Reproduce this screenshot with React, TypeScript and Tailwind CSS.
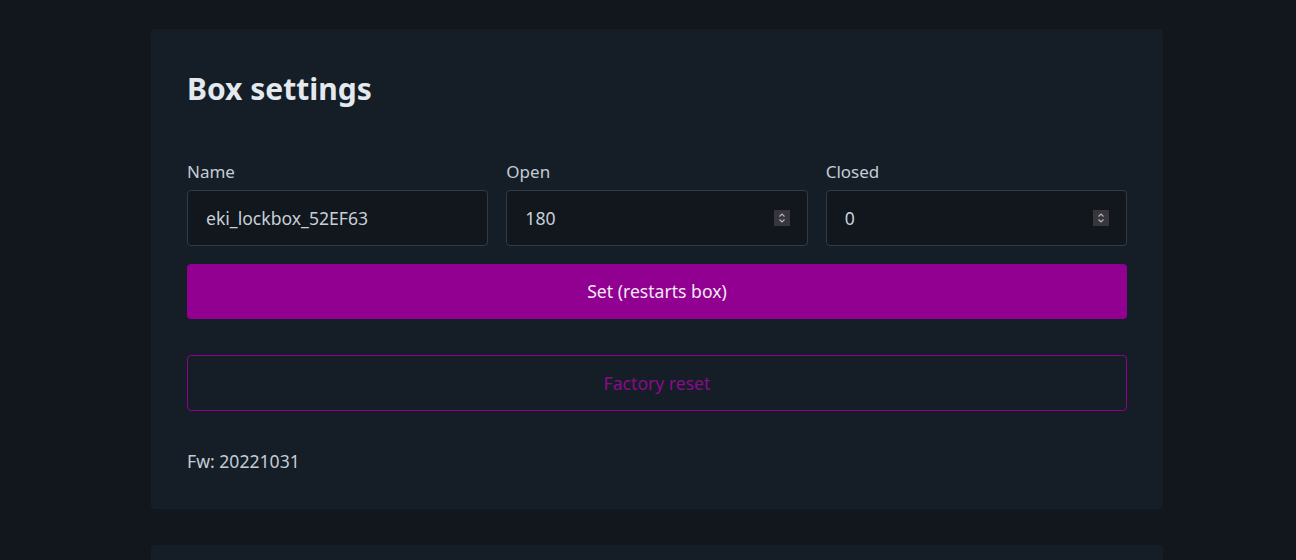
import React from "react";

const Spinner = () => (
  <div className="flex h-4 w-4 items-center justify-center bg-[#38363d]">
    <svg width="8" height="12" viewBox="0 0 8 12" fill="none" stroke="#b7b4bd" strokeWidth="1.1">
      <path d="M1.5 4.5 L4 2 L6.5 4.5" />
      <path d="M1.5 7.5 L4 10 L6.5 7.5" />
    </svg>
  </div>
);

const Field = ({ label, value, number }: { label: string; value: string; number?: boolean }) => (
  <div className="flex flex-col gap-[6px]">
    <label className="text-[17px] leading-[24px] text-[#c3ccd6]">{label}</label>
    <div className="flex h-[56px] items-center justify-between rounded-[4px] border border-[#2e3c48] bg-[#11171d] pl-[18px] pr-[17px]">
      <span className="text-[17.6px] text-[#c7d0da]">{value}</span>
      {number && <Spinner />}
    </div>
  </div>
);

export default function App() {
  return (
    <div
      className="min-h-screen bg-[#11171d] pt-[29px]"
      style={{ fontFamily: '"Noto Sans", "Open Sans", sans-serif' }}
    >
      <div className="ml-[151px] w-[1012px] rounded-[4px] bg-[#151e26] px-[36px] pt-[40px] pb-[36px]">
        <h2 className="text-[30px] font-bold leading-[40px] text-[#e3e9ee]">Box settings</h2>
        <div className="mt-[51px] grid grid-cols-3 gap-[18px]">
          <Field label="Name" value="eki_lockbox_52EF63" />
          <Field label="Open" value="180" number />
          <Field label="Closed" value="0" number />
        </div>
        <button className="mt-[18px] flex h-[55px] w-full items-center justify-center rounded-[4px] bg-[#910091] text-[17.6px] text-[#f3eaf3]">
          Set (restarts box)
        </button>
        <button className="mt-[36px] flex h-[56px] w-full items-center justify-center rounded-[4px] border border-[#910091] text-[17.6px] text-[#8a0b8a]">
          Factory reset
        </button>
        <p className="mt-[38px] text-[17.6px] leading-[24px] text-[#c3ccd6]">Fw: 20221031</p>
      </div>
      <div className="ml-[151px] mt-[36px] h-[40px] w-[1012px] rounded-t-[4px] bg-[#151e26]" />
    </div>
  );
}
